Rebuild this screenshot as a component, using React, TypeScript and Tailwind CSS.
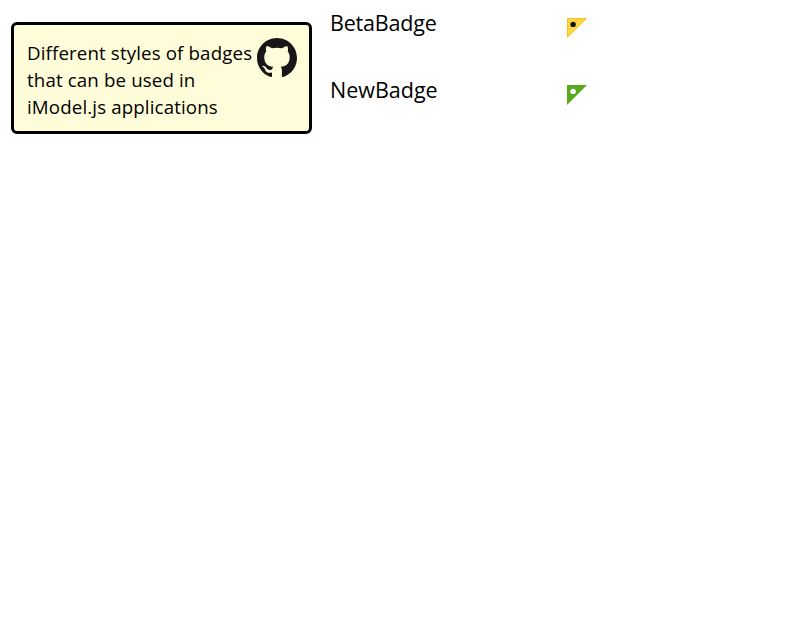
function GithubMark() {
  return (
    <svg className="mt-[13px] size-10 shrink-0" viewBox="0 0.3 24 24" fill="#181617" role="img" aria-label="GitHub">
      <path d="M12 .297c-6.63 0-12 5.373-12 12 0 5.303 3.438 9.8 8.205 11.385.6.113.82-.258.82-.577 0-.285-.01-1.04-.015-2.04-3.338.724-4.042-1.61-4.042-1.61C4.422 18.07 3.633 17.7 3.633 17.7c-1.087-.744.084-.729.084-.729 1.205.084 1.838 1.236 1.838 1.236 1.07 1.835 2.809 1.305 3.495.998.108-.776.417-1.305.76-1.605-2.665-.3-5.466-1.332-5.466-5.93 0-1.31.465-2.38 1.235-3.22-.135-.303-.54-1.523.105-3.176 0 0 1.005-.322 3.3 1.23.96-.267 1.98-.399 3-.405 1.02.006 2.04.138 3 .405 2.28-1.552 3.285-1.23 3.285-1.23.645 1.653.24 2.873.12 3.176.765.84 1.23 1.91 1.23 3.22 0 4.61-2.805 5.625-5.475 5.92.42.36.81 1.096.81 2.22 0 1.606-.015 2.896-.015 3.286 0 .315.21.69.825.57C20.565 22.092 24 17.592 24 12.297c0-6.627-5.373-12-12-12" />
    </svg>
  );
}

function BetaBadge() {
  return (
    <svg className="size-5" viewBox="0 0 20 20">
      <path d="M0 0H20L0 20Z" fill="#ffd542" />
      <path d="M.5 19V.5H19.3L.5 19.3" fill="none" stroke="#f5bd24" strokeWidth=".9" />
      <circle cx="6.1" cy="6.4" r="2.7" fill="#111" />
    </svg>
  );
}

function NewBadge() {
  return (
    <svg className="size-5" viewBox="0 0 20 20">
      <path d="M0 0H20L0 20Z" fill="#56aa1c" />
      <circle cx="6.1" cy="6.4" r="2.7" fill="#fff" />
    </svg>
  );
}

export default function App() {
  return (
    <main className="flex h-[617px] w-[804px] items-start bg-white pl-[11px] font-['Open_Sans','Noto_Sans',sans-serif] text-black">
      <aside className="mt-[22px] flex h-28 w-[301px] justify-between rounded-md border-[3px] border-black bg-[#fffdd9] pl-[13px] pr-3">
        <p className="pt-[14px] text-[18.7px] leading-[27px] tracking-[0.14px] whitespace-nowrap">
          Different styles of badges<br />that can be used in<br />iModel.js applications
        </p>
        <GithubMark />
      </aside>
      <section className="ml-[18px] grid grid-cols-[237px_20px] grid-rows-[67px_67px] text-[21.5px] leading-[30px]">
        <span className="pt-2 tracking-[-0.2px]">BetaBadge</span>
        <div className="pt-[18px]"><BetaBadge /></div>
        <span className="pt-2">NewBadge</span>
        <div className="pt-[18px]"><NewBadge /></div>
      </section>
    </main>
  );
}
